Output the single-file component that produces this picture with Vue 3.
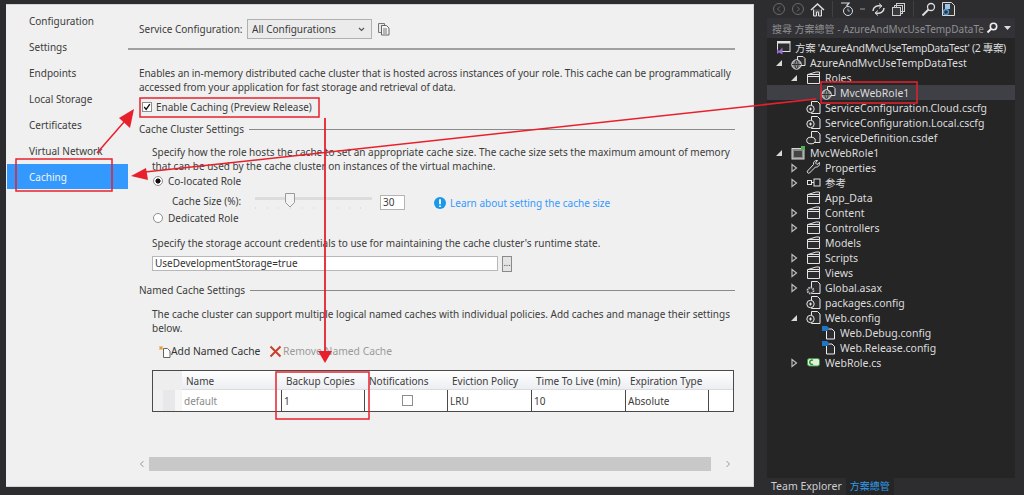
<script setup>
const navItems = ['Configuration', 'Settings', 'Endpoints', 'Local Storage', 'Certificates', 'Virtual Network', 'Caching']
const treeRows = [
  { d: 0, icon: 'sln', text: "方案 'AzureAndMvcUseTempDataTest' (2 專案)" },
  { d: 1, icon: 'cloud', arrow: 'open', text: 'AzureAndMvcUseTempDataTest' },
  { d: 2, icon: 'folder', arrow: 'open', text: 'Roles' },
  { d: 3, icon: 'cloud', text: 'MvcWebRole1', selected: true },
  { d: 2, icon: 'cfg', text: 'ServiceConfiguration.Cloud.cscfg' },
  { d: 2, icon: 'cfg', text: 'ServiceConfiguration.Local.cscfg' },
  { d: 2, icon: 'def', text: 'ServiceDefinition.csdef' },
  { d: 1, icon: 'web', arrow: 'open', text: 'MvcWebRole1' },
  { d: 2, icon: 'wrench', arrow: 'closed', text: 'Properties' },
  { d: 2, icon: 'refs', arrow: 'closed', text: '参考' },
  { d: 2, icon: 'folder', text: 'App_Data' },
  { d: 2, icon: 'folder', arrow: 'closed', text: 'Content' },
  { d: 2, icon: 'folder', arrow: 'closed', text: 'Controllers' },
  { d: 2, icon: 'folder', text: 'Models' },
  { d: 2, icon: 'folder', arrow: 'closed', text: 'Scripts' },
  { d: 2, icon: 'folder', arrow: 'closed', text: 'Views' },
  { d: 2, icon: 'gear', arrow: 'closed', text: 'Global.asax' },
  { d: 2, icon: 'cfg', text: 'packages.config' },
  { d: 2, icon: 'cfg', arrow: 'open', text: 'Web.config' },
  { d: 3, icon: 'xform', text: 'Web.Debug.config' },
  { d: 3, icon: 'xform', text: 'Web.Release.config' },
  { d: 2, icon: 'cs', arrow: 'closed', text: 'WebRole.cs' },
]
const headers = ['Name', 'Backup Copies', 'Notifications', 'Eviction Policy', 'Time To Live (min)', 'Expiration Type']
</script>

<template>
  <div class="screen">
    <svg class="defs" aria-hidden="true">
      <symbol id="i-sln" viewBox="0 0 15 15">
        <rect x="1.500" y="1.500" width="12.500" height="10" fill="#2d2d30" stroke="#e0e0e0" />
        <rect x="1.500" y="1.500" width="12.500" height="2" fill="#e0e0e0" />
        <path d="M1 9l2 2 3.500-3.500v7L3 12.500 1 14z" fill="#9b6fd0" />
      </symbol>
      <symbol id="i-folder" viewBox="0 0 15 15">
        <path d="M1.500 4.500h12v9h-12z" fill="#2d2d30" stroke="#e4e4e4" />
        <path d="M2 4.500l8-2.500h3.500v2.500z" fill="#2d2d30" stroke="#e4e4e4" />
        <path d="M1.500 6.500h12" stroke="#e4e4e4" />
      </symbol>
      <symbol id="i-cloud" viewBox="0 0 15 15">
        <path d="M6.500 1.500h5.500l2 2v7h-7.500z" fill="#2d2d30" stroke="#e4e4e4" />
        <circle cx="5.500" cy="9.500" r="4.700" fill="#8d8d8d" stroke="#e8e8e8" />
        <path d="M1 9.500h9M5.500 5c-2 2-2 7 0 9M5.500 5c2 2 2 7 0 9" stroke="#2d2d30" stroke-width=".9" fill="none" />
      </symbol>
      <symbol id="i-cfg" viewBox="0 0 15 15">
        <path d="M5.500 1.500h6l2.500 2.500v9.500H5.500z" fill="#2d2d30" stroke="#e8e8e8" />
        <circle cx="4.500" cy="9" r="3.700" fill="#2d2d30" stroke="#e8e8e8" />
        <path d="M3 9h3M4.500 7.500v3" stroke="#e8e8e8" />
      </symbol>
      <symbol id="i-def" viewBox="0 0 15 15">
        <path d="M5.500 1.500h6l2.500 2.500v8.500H5.500z" fill="#2d2d30" stroke="#e8e8e8" />
        <ellipse cx="5" cy="10.500" rx="4.300" ry="3.300" fill="#2d2d30" stroke="#e8e8e8" />
      </symbol>
      <symbol id="i-web" viewBox="0 0 15 15">
        <rect x="1" y="3.500" width="12" height="10.500" fill="#8a8a8a" stroke="#d8d8d8" />
        <rect x="3" y="6" width="8" height="6" fill="#444" />
        <rect x="10" y="1" width="4" height="4" fill="#52b052" />
      </symbol>
      <symbol id="i-wrench" viewBox="0 0 15 15">
        <path d="M13.500 2.500l-2.500 2-1.500-1.500 2-2.500c-2.500-.5-4.500 1.500-4 4L1.500 11c-1 1 .8 3 2 2l6-6c2.500.5 4.500-1.500 4-4.500z" fill="#2d2d30" stroke="#e4e4e4" />
      </symbol>
      <symbol id="i-refs" viewBox="0 0 15 15">
        <rect x="1.500" y="5.500" width="4" height="4" fill="none" stroke="#e4e4e4" />
        <rect x="8" y="4" width="6" height="7" fill="none" stroke="#e4e4e4" />
        <path d="M5.500 7.500H8" stroke="#e4e4e4" />
      </symbol>
      <symbol id="i-gear" viewBox="0 0 15 15">
        <path d="M5.500 1.500h6l2.500 2.500v9.500H5.500z" fill="#2d2d30" stroke="#e8e8e8" />
        <circle cx="4.500" cy="10.500" r="3" fill="#2d2d30" stroke="#c4c4c4" stroke-width="1.800" stroke-dasharray="1.500 .8" />
      </symbol>
      <symbol id="i-xform" viewBox="0 0 15 15">
        <path d="M5.500 4h5.500l2.500 2.500V14h-8z" fill="#2d2d30" stroke="#f0f0f0" />
        <rect x="1" y="1" width="5" height="5" fill="#1f74c4" />
        <path d="M6 1l2.500 2.500L6 6z" fill="#1f74c4" />
      </symbol>
      <symbol id="i-cs" viewBox="0 0 15 15">
        <rect x="1.500" y="3.500" width="12" height="7.500" rx="2" fill="#dfeedd" stroke="#3f9d3f" />
        <path d="M7 5.300A2.200 2.200 0 1 0 7 9.200" fill="none" stroke="#2e8b2e" stroke-width="1.500" />
      </symbol>
    </svg>

    <section class="designer">
      <nav class="nav">
        <div v-for="item in navItems" :key="item" class="nav-item" :class="{ current: item === 'Caching' }">{{ item }}</div>
      </nav>

      <main class="main">
        <div class="config-bar">
          <span class="config-label">Service Configuration:</span>
          <div class="select">
            <span>All Configurations</span>
            <svg width="7" height="5" viewBox="0 0 7 5"><path d="M1 1l2.500 2.500L6 1" fill="none" stroke="#555" stroke-width="1.200" /></svg>
          </div>
          <svg class="copy-icon" width="12" height="14" viewBox="0 0 12 14">
            <path d="M.5 1.500h6v9h-6z" fill="#e8e8e8" stroke="#777" />
            <path d="M3.500 3.500h5l2.500 2.500v7h-7.500z" fill="#f4f4f4" stroke="#666" />
            <path d="M5 7h4M5 9h4M5 11h4" stroke="#777" />
          </svg>
        </div>

        <p class="desc">Enables an in-memory distributed cache cluster that is hosted across instances of your role. This cache can be programmatically accessed from your application for fast storage and retrieval of data.</p>

        <label class="enable">
          <span class="check"><svg width="10" height="10" viewBox="0 0 10 10"><path d="M1.500 5l2.500 3 4.500-6.500" fill="none" stroke="#111" stroke-width="1.700" /></svg></span>
          <span>Enable Caching (Preview Release)</span>
        </label>

        <div class="group-title cluster-title"><span>Cache Cluster Settings</span><i></i></div>

        <div class="indent">
          <p class="spec">Specify how the role hosts the cache to set an appropriate cache size. The cache size sets the maximum amount of memory that can be used by the cache cluster on instances of the virtual machine.</p>

          <div class="radio-row first-radio"><span class="radio on"></span>Co-located Role</div>

          <div class="size-row">
            <span class="size-label">Cache Size (%):</span>
            <div class="slider">
              <div class="track"></div>
              <svg class="thumb" width="10" height="15" viewBox="0 0 10 15"><path d="M.5.500h9v9L5 14 .5 9.500z" fill="#f3f3f3" stroke="#9a9a9a" /></svg>
              <div class="ticks"></div>
            </div>
            <span class="size-input">30</span>
            <svg class="info" width="12" height="12" viewBox="0 0 12 12"><circle cx="6" cy="6" r="6" fill="#1c97ea" /><path d="M6 2.200v5M6 8.400v1.600" stroke="#fff" stroke-width="1.800" /></svg>
            <span class="link">Learn about setting the cache size</span>
          </div>

          <div class="radio-row"><span class="radio"></span>Dedicated Role</div>

          <p class="storage-label">Specify the storage account credentials to use for maintaining the cache cluster's runtime state.</p>
          <div class="storage-row">
            <span class="storage-input">UseDevelopmentStorage=true</span>
            <span class="dots">...</span>
          </div>
        </div>

        <div class="group-title named-title"><span>Named Cache Settings</span><i></i></div>

        <div class="indent">
          <p class="named-desc">The cache cluster can support multiple logical named caches with individual policies. Add caches and manage their settings below.</p>
          <div class="cache-tools">
            <svg width="13" height="13" viewBox="0 0 13 13"><path d="M5.500 3.500h4l2.500 2.500v6.500H5.500z" fill="#fff" stroke="#666" /><path d="M3 1v4M1 3h4M1.500 1.500l3 3M4.500 1.500l-3 3" stroke="#e0a030" /></svg>
            <span class="add">Add Named Cache</span>
            <svg class="remove-x" width="13" height="13" viewBox="0 0 13 13"><path d="M1.500 1.500l10 10M11.500 1.500l-10 10" stroke="#c8402a" stroke-width="2" /></svg>
            <span class="remove">Remove Named Cache</span>
          </div>

          <div class="grid">
            <div class="corner"></div>
            <div v-for="h in headers" :key="h" class="head">{{ h }}</div>
            <div class="head tail"></div>
            <div class="row-head"></div>
            <div class="cell muted">default</div>
            <div class="cell">1</div>
            <div class="cell center"><span class="cell-check"></span></div>
            <div class="cell">LRU</div>
            <div class="cell">10</div>
            <div class="cell">Absolute</div>
            <div class="cell last"></div>
          </div>
        </div>

        <div class="hscroll">
          <svg width="6" height="8" viewBox="0 0 6 8"><path d="M4.500 1L1.500 4l3 3" fill="none" stroke="#999" /></svg>
          <div class="hthumb"></div>
          <svg width="6" height="8" viewBox="0 0 6 8"><path d="M1.500 1l3 3-3 3" fill="none" stroke="#999" /></svg>
        </div>
      </main>
    </section>

    <aside class="explorer">
      <div class="toolbar">
        <svg width="14" height="14" viewBox="0 0 14 14"><circle cx="7" cy="7" r="5.500" fill="none" stroke="#6a6a6a" /><path d="M8 4.500L5.500 7 8 9.500" fill="none" stroke="#6a6a6a" /></svg>
        <svg width="14" height="14" viewBox="0 0 14 14"><circle cx="7" cy="7" r="5.500" fill="none" stroke="#6a6a6a" /><path d="M6 4.500L8.500 7 6 9.500" fill="none" stroke="#6a6a6a" /></svg>
        <svg width="15" height="15" viewBox="0 0 15 15"><path d="M1 8l6.500-6L14 8" fill="none" stroke="#e0e0e0" stroke-width="1.500" /><path d="M3.500 7.500v6.500h3v-4h2v4h3V7.500" fill="#555" stroke="#e0e0e0" /></svg>
        <span class="sep"></span>
        <svg width="15" height="15" viewBox="0 0 15 15"><path d="M1 1h8l-2.500 3" fill="none" stroke="#dcdcdc" stroke-width="1.200" /><circle cx="8" cy="9" r="4.500" fill="#2d2d30" stroke="#dcdcdc" /><path d="M8 6.500V9h2" stroke="#7fb3e0" fill="none" /></svg>
        <svg width="6" height="14" viewBox="0 0 6 14"><path d="M0 7h5" stroke="#999" /></svg>
        <svg width="15" height="15" viewBox="0 0 15 15"><path d="M2 9c0-4 4-6 8-5M13 6c0 4-4 6-8 5" fill="none" stroke="#dcdcdc" stroke-width="1.500" /><path d="M8 1.500L11 4 8 6.500M7 8.500L4 11l3 2.500" fill="none" stroke="#dcdcdc" /></svg>
        <svg width="15" height="15" viewBox="0 0 15 15"><rect x="5.500" y="1.500" width="8" height="8" fill="none" stroke="#cfcfcf" /><rect x="3.500" y="3.500" width="8" height="8" fill="none" stroke="#cfcfcf" /><rect x="1.500" y="5.500" width="8" height="8" fill="#3a3a3d" stroke="#cfcfcf" /></svg>
        <span class="sep"></span>
        <svg width="15" height="15" viewBox="0 0 15 15"><circle cx="10" cy="5" r="3.500" fill="none" stroke="#dcdcdc" stroke-width="1.300" /><path d="M7.500 7.500L1.500 13.500" stroke="#dcdcdc" stroke-width="2" /></svg>
        <svg width="15" height="16" viewBox="0 0 15 16"><path d="M1.500 1.500h9l3 3v10h-12z" fill="#333" stroke="#dcdcdc" /><rect x="4" y="3" width="5" height="5" fill="#9cc4e4" /><circle cx="5" cy="11" r="2.500" fill="none" stroke="#4a9de0" stroke-width="1.300" /></svg>
      </div>

      <div class="search">
        <span class="search-text">搜尋 方案總管 - AzureAndMvcUseTempDataTe</span>
        <svg width="12" height="12" viewBox="0 0 12 12"><circle cx="7.500" cy="4.500" r="3.200" fill="none" stroke="#eee" stroke-width="1.600" /><path d="M5 7L1.500 10.500" stroke="#eee" stroke-width="2" /></svg>
        <svg class="search-caret" width="7" height="4" viewBox="0 0 7 4"><path d="M0 0h7L3.500 4z" fill="#ddd" /></svg>
      </div>

      <div class="tree">
        <div
          v-for="(r, i) in treeRows"
          :key="i"
          class="tree-row"
          :class="{ selected: r.selected, root: r.d === 0 }"
          :style="{ paddingLeft: 9 + 15 * r.d + 'px' }"
        >
          <svg v-if="r.arrow" class="twist" width="10" height="10" viewBox="0 0 10 10">
            <path v-if="r.arrow === 'open'" d="M8 2v6H2z" fill="#d8d8d8" />
            <path v-else d="M3 1.500L7.500 5 3 8.500z" fill="none" stroke="#bcbcbc" stroke-width="1.200" />
          </svg>
          <svg class="ico" width="15" height="15"><use :href="'#i-' + r.icon" /></svg>
          <span class="tree-text">{{ r.text }}</span>
        </div>
      </div>

      <div class="tabs">
        <span class="tab">Team Explorer</span>
        <span class="tab active">方案總管</span>
      </div>
    </aside>

    <svg class="marks" width="1024" height="495" viewBox="0 0 1024 495" aria-hidden="true">
      <g fill="none" stroke="#e8202c" stroke-width="1.500">
        <rect x="140" y="98" width="179" height="19" />
        <rect x="16" y="159" width="96" height="32" />
        <rect x="821" y="82" width="96" height="21" />
        <rect x="276" y="372" width="93" height="47" />
        <path d="M816 99L145 172" />
        <path d="M97 153L124 122" />
        <path d="M325 118V354" stroke-width="1.800" />
      </g>
      <g fill="#e8202c">
        <path d="M131 176L146 168L148 180z" />
        <path d="M134 109L130 128L119 118z" />
        <path d="M325 363L318 351H332z" />
      </g>
    </svg>
  </div>
</template>

<style>
html, body { margin: 0; background: #2d2d30; }
</style>

<style scoped>
.screen {
  position: relative;
  width: 1024px;
  height: 495px;
  overflow: hidden;
  display: flex;
  background: #2d2d30;
  font-family: "Noto Sans", "Noto Sans CJK TC", sans-serif;
  font-size: 10.5px;
  color: #3c3c3c;
}
.defs { position: absolute; width: 0; height: 0; }
p { margin: 0; }

.designer {
  box-sizing: border-box;
  margin: 4px 0 8px 6px;
  width: 748px;
  display: flex;
  background: #f0f0f0;
  border: 1px solid #d4d4d4;
  border-left: 0;
  font-size: 10px;
}
.nav { width: 122px; flex: none; padding-top: 3px; }
.nav-item {
  height: 26px;
  line-height: 26px;
  padding-left: 23px;
}
.nav-item.current {
  margin-left: 1px;
  height: 25px;
  padding-left: 22px;
  background: #3399ff;
  color: #f4f4f4;
}
.main { flex: 1; min-width: 0; display: flex; flex-direction: column; }

.config-bar {
  display: flex;
  align-items: center;
  height: 20px;
  margin-top: 14px;
  padding-bottom: 9px;
  border-bottom: 2px solid #a0a0a0;
  width: 607px;
}
.config-label { margin-left: 11px; width: 108px; flex: none; white-space: nowrap; }
.select {
  box-sizing: border-box;
  width: 125px;
  height: 20px;
  display: flex;
  align-items: center;
  justify-content: space-between;
  padding: 0 6px 0 4px;
  border: 1px solid #b0b0b0;
  background: #ebebeb;
}
.copy-icon { margin-left: 6px; }

.desc { margin: 17px 14px 0 11px; line-height: 13.500px; letter-spacing: -0.06px; }
.enable {
  display: flex;
  align-items: center;
  gap: 4px;
  height: 15px;
  margin: 5px 0 0 14px;
}
.check {
  box-sizing: border-box;
  width: 10px;
  height: 10px;
  border: 1px solid #8e8e8e;
  background: #fff;
  display: flex;
  align-items: center;
  justify-content: center;
}
.group-title {
  display: flex;
  align-items: center;
  gap: 5px;
  height: 14px;
  margin-left: 11px;
  width: 596px;
}
.group-title i { flex: 1; height: 1px; background: #8a8a8a; }
.cluster-title { margin-top: 8px; }
.named-title { margin-top: 12px; }
.indent { margin-left: 24px; }

.spec { margin-top: 10px; width: 585px; line-height: 13.500px; }
.radio-row { display: flex; align-items: center; gap: 5px; height: 14px; margin-left: 1px; }
.first-radio { margin-top: 1px; }
.radio {
  box-sizing: border-box;
  width: 10px;
  height: 10px;
  border-radius: 50%;
  border: 1px solid #8e8e8e;
  background: #fff;
}
.radio.on { background: radial-gradient(circle, #111 0 2.300px, #fff 2.800px); }
.size-row { display: flex; align-items: center; height: 21px; margin-top: 2px; }
.size-label { margin-left: 20px; width: 83px; flex: none; }
.slider { position: relative; width: 117px; height: 18px; flex: none; }
.track { position: absolute; left: 0; right: 0; top: 5px; height: 3px; background: #dcdcdc; }
.thumb { position: absolute; left: 30px; top: 1px; }
.ticks {
  position: absolute;
  left: 0; right: 0; top: 15px; height: 2px;
  background: repeating-linear-gradient(90deg, #dedede 0 1px, transparent 1px 11.700px);
}
.size-input {
  box-sizing: border-box;
  width: 25px;
  height: 15px;
  line-height: 13px;
  margin: 4px 0 0 8px;
  padding-left: 2px;
  border: 1px solid #b4b4b4;
  background: #fff;
}
.info { margin-left: 29px; margin-top: 5px; }
.link { margin-left: 4px; margin-top: 5px; color: #3399ff; }

.storage-label { margin-top: 11px; line-height: 14px; }
.storage-row { display: flex; gap: 4px; margin-top: 6px; height: 15px; }
.storage-input {
  box-sizing: border-box;
  width: 346px;
  height: 15px;
  line-height: 13px;
  padding-left: 2px;
  border: 1px solid #b8b8b8;
  background: #fff;
  color: #333;
}
.dots {
  box-sizing: border-box;
  width: 10px;
  height: 16px;
  line-height: 12px;
  text-align: center;
  border: 1px solid #8a8a8a;
  background: #e4e4e4;
  font-size: 9px;
}
.named-desc { margin-top: 11px; width: 585px; line-height: 13.500px; }

.cache-tools { display: flex; align-items: center; height: 16px; margin: 8px 0 0 6px; font-size: 10.3px; }
.add { width: 98px; flex: none; color: #333; }
.remove-x { flex: none; }
.remove { margin-left: 1px; color: #9a9a9a; }

.grid {
  box-sizing: border-box;
  display: grid;
  grid-template-columns: 29px 100px 83px 83px 84px 94px 83px 1fr;
  grid-template-rows: 19px 21px;
  width: 582px;
  height: 42px;
  margin-top: 11px;
  border: 1px solid #4a4a4a;
  background: #fff;
}
.corner { background: #eeeeee; }
.head {
  line-height: 21px;
  padding-left: 4px;
  background: linear-gradient(#ffffff, #eceef2);
  border-bottom: 1px solid #dcdcdc;
  box-sizing: border-box;
  white-space: nowrap;
}
.row-head { background: linear-gradient(90deg, #f0f0f0 0 10px, #e6e8ea 10px 22px, #f6f6f6 22px); }
.cell {
  box-sizing: border-box;
  line-height: 22px;
  padding-left: 2px;
  border-right: 1px solid #4a4a4a;
  background: #fff;
}
.cell.last { border-right: 0; }
.muted { color: #8a8a8a; }
.center { display: flex; align-items: center; justify-content: center; }
.cell-check { box-sizing: border-box; width: 11px; height: 11px; border: 1px solid #8e8e8e; }

.hscroll { display: flex; align-items: center; gap: 4px; margin: 45px 0 0 11px; width: 592px; height: 14px; }
.hthumb { flex: 1; height: 14px; background: #c8c8c8; margin-right: 10px; }

.explorer {
  margin-left: 13px;
  width: 248px;
  display: flex;
  flex-direction: column;
  flex: none;
}
.toolbar { display: flex; align-items: center; gap: 5px; height: 18px; padding-left: 5px; }
.sep { width: 1px; height: 16px; background: #3f3f46; margin: 0 2px; }
.search {
  box-sizing: border-box;
  height: 20px;
  display: flex;
  align-items: center;
  padding: 0 4px 0 5px;
  background: #333337;
  color: #8f8f8f;
  gap: 3px;
  font-size: 10px;
}
.search-text { flex: 1; min-width: 0; white-space: nowrap; margin-right: 5px; }
.search-caret { margin-left: 3px; }
.tree {
  flex: 1;
  min-height: 0;
  box-sizing: border-box;
  padding-top: 2px;
  background: #252526;
}
.tree-row {
  box-sizing: border-box;
  height: 15px;
  display: flex;
  align-items: center;
  color: #dcdcdc;
  white-space: nowrap;
}
.tree-row.root { letter-spacing: -0.35px; }
.tree-row.selected { background: #3f3f46; }
.twist { margin-left: -17px; margin-right: 7px; flex: none; }
.ico { flex: none; }
.tree-text { margin-left: 4px; }
.tabs {
  height: 17px;
  display: flex;
  align-items: center;
  background: #2d2d30;
  color: #cfcfcf;
}
.tab { padding: 0 4px; line-height: 17px; }
.tab.active { color: #2f9bea; background: #252526; font-size: 10px; }

.marks { position: absolute; left: 0; top: 0; pointer-events: none; }
</style>
